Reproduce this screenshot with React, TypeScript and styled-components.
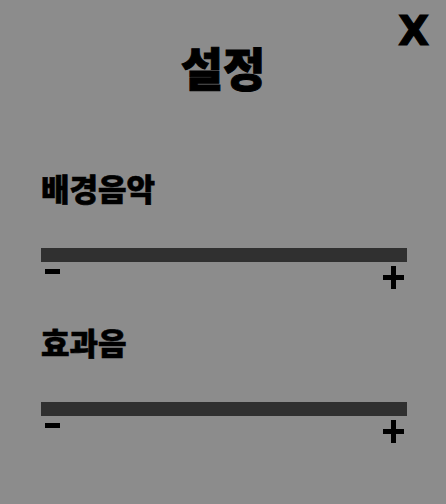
import * as React from "react";
import styled, { createGlobalStyle } from "styled-components";

const GlobalStyle = createGlobalStyle`
  html, body {
    margin: 0;
    padding: 0;
    background: #8c8c8c;
  }
  body {
    font-family: "Noto Sans CJK KR", "Noto Sans", sans-serif;
    color: #000;
  }
`;

const Panel = styled.div`
  width: 446px;
  height: 504px;
  background: #8c8c8c;
  display: flex;
  flex-direction: column;
`;

const Header = styled.div`
  display: grid;
  grid-template-columns: 1fr auto 1fr;
  align-items: start;
  padding: 0 17px;
`;

const Title = styled.h1`
  grid-column: 2;
  margin: 36px 0 0;
  font-size: 46px;
  font-weight: 900;
  line-height: 60px;
  -webkit-text-stroke: 1px #000;
`;

const CloseButton = styled.button`
  grid-column: 3;
  justify-self: end;
  margin: 9px 0 0;
  padding: 0;
  border: none;
  background: none;
  font-family: "DejaVu Sans", sans-serif;
  font-size: 40px;
  font-weight: 700;
  line-height: 44px;
  color: #000;
  -webkit-text-stroke: 1.2px #000;
  cursor: pointer;
`;

const Body = styled.div`
  padding: 0 39px 0 41px;
  display: flex;
  flex-direction: column;
`;

const Section = styled.section<{ $top: number }>`
  margin-top: ${p => p.$top}px;
  display: flex;
  flex-direction: column;
`;

const Label = styled.h2`
  margin: 0;
  font-size: 31px;
  font-weight: 900;
  line-height: 40px;
  -webkit-text-stroke: 0.6px #000;
`;

const Track = styled.div`
  margin-top: 40px;
  height: 14px;
  background: #303030;
`;

const Controls = styled.div`
  display: flex;
  justify-content: space-between;
  align-items: flex-start;
`;

const Minus = styled.span`
  margin: 7px 0 0 4px;
  width: 15px;
  height: 5px;
  background: #000;
`;

const Plus = styled.span`
  position: relative;
  margin: 4px 3px 0 0;
  width: 21px;
  height: 23px;
  &::before,
  &::after {
    content: "";
    position: absolute;
    background: #000;
  }
  &::before {
    left: 0;
    right: 0;
    top: 9px;
    height: 5px;
  }
  &::after {
    top: 0;
    bottom: 0;
    left: 8px;
    width: 5px;
  }
`;

const VolumeSlider = ({ label, top }: { label: string; top: number }) => (
  <Section $top={top}>
    <Label>{label}</Label>
    <Track />
    <Controls>
      <Minus />
      <Plus />
    </Controls>
  </Section>
);

export default function App() {
  return (
    <>
      <GlobalStyle />
      <Panel>
        <Header>
          <Title>설정</Title>
          <CloseButton>X</CloseButton>
        </Header>
        <Body>
          <VolumeSlider label="배경음악" top={72} />
          <VolumeSlider label="효과음" top={33} />
        </Body>
      </Panel>
    </>
  );
}
